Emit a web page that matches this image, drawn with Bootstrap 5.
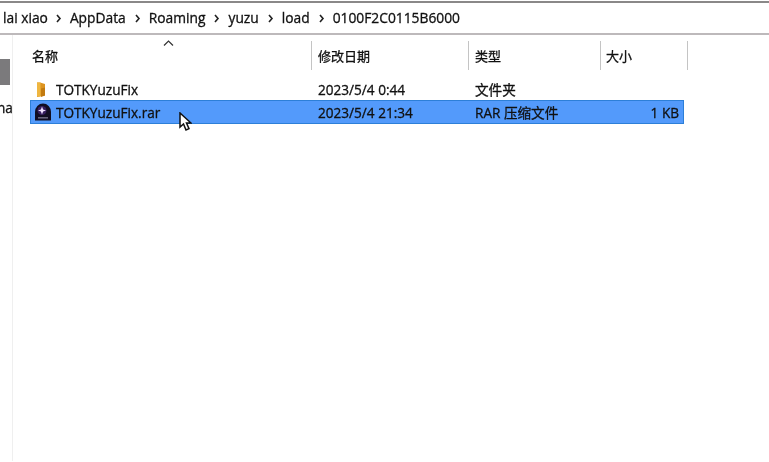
<!DOCTYPE html>
<html lang="zh">
<head>
<meta charset="utf-8">
<title>Explorer</title>
<link href="https://cdn.jsdelivr.net/npm/bootstrap@5.3.0/dist/css/bootstrap.min.css" rel="stylesheet">
<style>
html,body{width:769px;height:462px;overflow:hidden;background:#fff}
body{font-family:"Open Sans","Noto Sans CJK SC",sans-serif;font-size:13.6px;color:#111;position:relative;-webkit-text-stroke:.3px #111}
.addr,.body-wrap,.caret,.cur{filter:blur(.25px)}
.addr{height:34px;margin-top:1px;border-top:2px solid #8a8888;border-bottom:2px solid #bdb9bb;padding-left:3px;font-size:13.8px;gap:8px}
.addr span:first-child{margin-right:-1px}
.chev{width:7px;height:9px;flex:none}
.body-wrap{height:426px}
.side{width:13px;flex:none;border-right:1px solid #efefef;padding-top:24px;overflow:hidden}
.side-block{width:10px;height:26px;background:#7b7a7c}
.side-text{margin-top:14px;margin-left:-3px;line-height:18px}
.main-area{width:680px;padding-left:17px;padding-top:6px;position:relative}
.hdr{height:29px;margin-bottom:10px}
.c1,.c2,.c3,.c4{flex:none}
.c1{width:282px;padding-left:2px}
.c2{width:157px;padding-left:6px}
.c3{width:132px;padding-left:6px}
.c4{width:87px;padding-left:5px}
.hc{height:29px;line-height:31px;border-right:1px solid #c4c4c4;white-space:nowrap;font-size:13px}
.rowf{height:19px;line-height:19px;white-space:nowrap}
.rowf .c1{padding-left:26px;position:relative}
.rows{margin-top:1px;height:24px;line-height:24px;background:#539afb;border:1px solid #2d7fd8;width:654px;white-space:nowrap}
.rows .c1{padding-left:25px;position:relative;width:281px}
.rows .c4{width:82px;text-align:right;padding-right:4px}
.ico{position:absolute;left:3px;top:50%;transform:translateY(-50%);width:18px;height:19px}
.caret{position:absolute;left:163px;top:40px;width:11px;height:6px}
.cur{position:absolute;left:179px;top:112px;width:13px;height:19px}
</style>
</head>
<body>
<div class="addr d-flex align-items-center">
<span>lai xiao</span>
<svg class="chev" viewBox="0 0 7 9"><path d="M2 1l3 3.5L2 8" fill="none" stroke="#222" stroke-width="1.6"/></svg>
<span>AppData</span>
<svg class="chev" viewBox="0 0 7 9"><path d="M2 1l3 3.5L2 8" fill="none" stroke="#222" stroke-width="1.6"/></svg>
<span>Roaming</span>
<svg class="chev" viewBox="0 0 7 9"><path d="M2 1l3 3.5L2 8" fill="none" stroke="#222" stroke-width="1.6"/></svg>
<span>yuzu</span>
<svg class="chev" viewBox="0 0 7 9"><path d="M2 1l3 3.5L2 8" fill="none" stroke="#222" stroke-width="1.6"/></svg>
<span>load</span>
<svg class="chev" viewBox="0 0 7 9"><path d="M2 1l3 3.5L2 8" fill="none" stroke="#222" stroke-width="1.6"/></svg>
<span>0100F2C0115B6000</span>
</div>
<div class="body-wrap d-flex">
<div class="side">
<div class="side-block"></div>
<div class="side-text">na</div>
</div>
<div class="main-area">
<div class="hdr d-flex">
<div class="hc c1">名称</div>
<div class="hc c2">修改日期</div>
<div class="hc c3">类型</div>
<div class="hc c4">大小</div>
</div>
<div class="rowf d-flex">
<div class="c1"><svg class="ico" viewBox="0 0 18 19"><path d="M4 2h3l5 1.500V15l-8 1.500z" fill="#dd9420"/><path d="M4 2h3.500v14H4z" fill="#efb640"/><path d="M8 8l4-1v8l-4 1.500z" fill="#c27a10"/></svg>TOTKYuzuFix</div>
<div class="c2">2023/5/4 0:44</div>
<div class="c3">文件夹</div>
<div class="c4"></div>
</div>
<div class="rows d-flex">
<div class="c1"><svg class="ico" viewBox="0 0 18 19"><path d="M1 18V9.500a8 8.500 0 0 1 16 0V18z" fill="#110e22"/><circle cx="8" cy="8" r="4.500" fill="#7a3fd0" opacity=".35"/><path d="M8 4l1.100 2.900L12 8l-2.900 1.100L8 12l-1.100-2.900L4 8l2.900-1.100z" fill="#f0e4ff"/><rect x="4" y="14.500" width="10" height="1.600" fill="#66637a"/></svg>TOTKYuzuFix.rar</div>
<div class="c2">2023/5/4 21:34</div>
<div class="c3">RAR 压缩文件</div>
<div class="c4">1 KB</div>
</div>
</div>
</div>
<svg class="caret" viewBox="0 0 11 6"><path d="M1 5.500l4.500-4.500 4.500 4.500" fill="none" stroke="#333" stroke-width="1.200"/></svg>
<svg class="cur" viewBox="0 0 13 19"><path d="M1 1v14l3.500-3 2.500 6 3-1.300-2.500-5.700h4.500z" fill="#fff" stroke="#111" stroke-width="1.500"/></svg>
</body>
</html>
